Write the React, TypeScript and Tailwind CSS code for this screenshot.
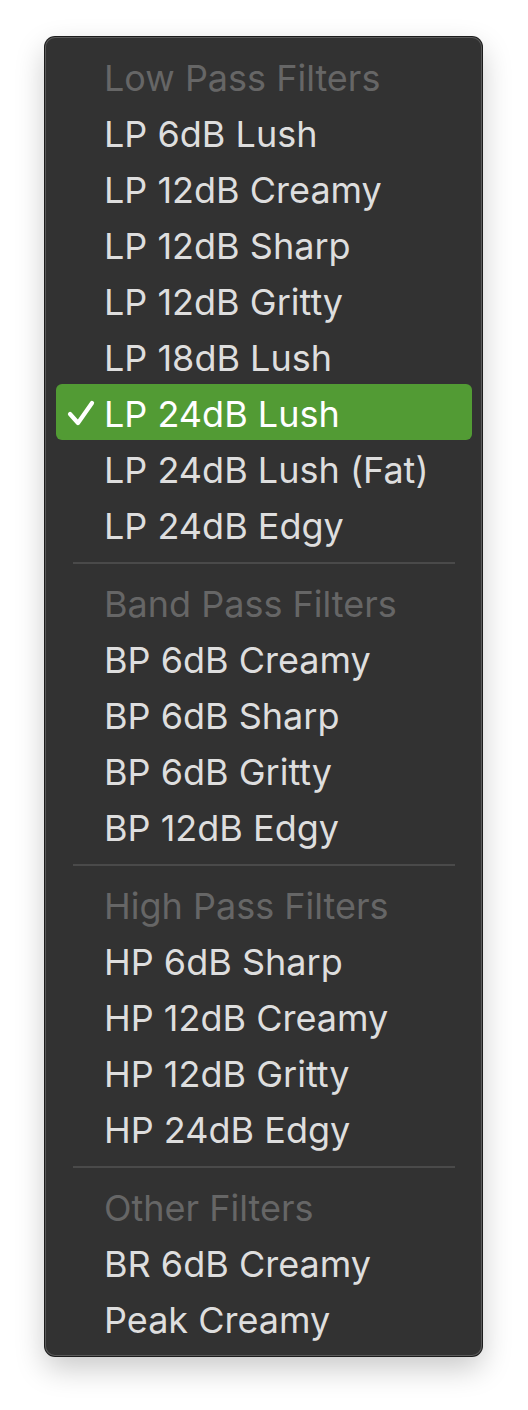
import React from "react";

type Group = { title: string; items: string[] };

const groups: Group[] = [
  {
    title: "Low Pass Filters",
    items: [
      "LP 6dB Lush",
      "LP 12dB Creamy",
      "LP 12dB Sharp",
      "LP 12dB Gritty",
      "LP 18dB Lush",
      "LP 24dB Lush",
      "LP 24dB Lush (Fat)",
      "LP 24dB Edgy",
    ],
  },
  {
    title: "Band Pass Filters",
    items: ["BP 6dB Creamy", "BP 6dB Sharp", "BP 6dB Gritty", "BP 12dB Edgy"],
  },
  {
    title: "High Pass Filters",
    items: ["HP 6dB Sharp", "HP 12dB Creamy", "HP 12dB Gritty", "HP 24dB Edgy"],
  },
  {
    title: "Other Filters",
    items: ["BR 6dB Creamy", "Peak Creamy"],
  },
];

const selected = "LP 24dB Lush";

const Check = () => (
  <svg
    width="28"
    height="26"
    viewBox="0 0 28 26"
    className="absolute left-[11px] top-[16px]"
  >
    <path
      d="M3 14 L11 23 L25 3"
      fill="none"
      stroke="#ffffff"
      strokeWidth="4.2"
      strokeLinecap="round"
      strokeLinejoin="round"
    />
  </svg>
);

const Row = ({ label }: { label: string }) => {
  const active = label === selected;
  return (
    <div
      className={`relative h-[56px] pl-[48px] leading-[61px] text-[36px] rounded-[6px] whitespace-nowrap ${
        active ? "bg-[#529b34] text-white" : "text-[#dedede]"
      }`}
    >
      {active && <Check />}
      {label}
    </div>
  );
};

export default function App() {
  return (
    <div
      className="w-[528px] h-[1410px] bg-white pl-[45px] pt-[37px]"
      style={{ fontFamily: "Inter, 'Noto Sans', sans-serif" }}
    >
      <div className="w-[437px] h-[1319px] rounded-[10px] bg-[#323232] pt-[11px] pl-[11px] pr-[10px] shadow-[0_0_0_1px_#1c1c1c,inset_0_0_0_1px_#5a5a5a,0_12px_30px_rgba(0,0,0,0.22)]">
        {groups.map((g, gi) => (
          <div key={g.title}>
            {gi > 0 && (
              <div className="h-[22px] flex items-center px-[17px]">
                <div className="h-[2px] w-full bg-[#4a4a4a]" />
              </div>
            )}
            <div className="h-[56px] pl-[48px] leading-[61px] text-[36px] text-[#666666] whitespace-nowrap">
              {g.title}
            </div>
            {g.items.map((it) => (
              <Row key={it} label={it} />
            ))}
          </div>
        ))}
      </div>
    </div>
  );
}
